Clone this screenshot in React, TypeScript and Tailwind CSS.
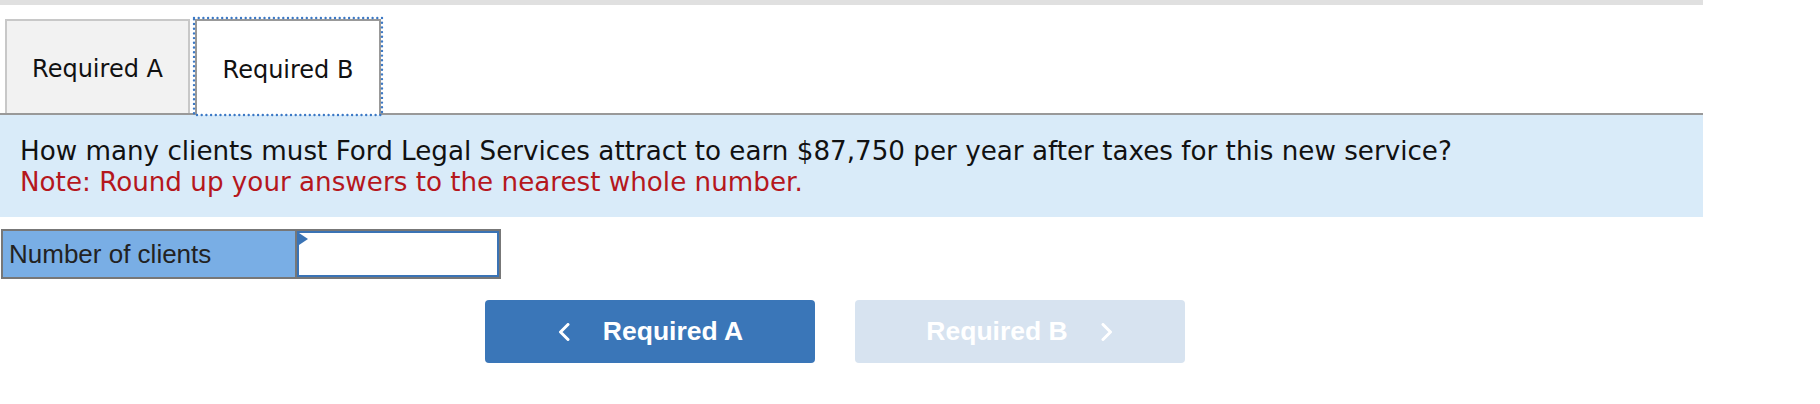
import React from 'react'

const Chevron = ({ dir }: { dir: 'left' | 'right' }) => (
  <svg width="14" height="18" viewBox="0 0 14 18" fill="none" className="shrink-0">
    <polyline
      points={dir === 'left' ? '11,1.5 3.5,9 11,16.5' : '3,1.5 10.5,9 3,16.5'}
      stroke="white"
      strokeWidth="3"
      strokeLinecap="round"
      strokeLinejoin="round"
    />
  </svg>
)

// focus ring drawn with round dots, like the browser's dotted outline
const FocusRing = () => (
  <svg className="pointer-events-none absolute -bottom-[1px] -left-[4px] -right-[4px] -top-[4px] h-[calc(100%+5px)] w-[calc(100%+8px)] overflow-visible">
    <rect
      x="1"
      y="1"
      width="calc(100% - 2px)"
      height="calc(100% - 2px)"
      fill="none"
      stroke="#3b78c5"
      strokeWidth="2.4"
      strokeLinecap="round"
      strokeDasharray="0 4.7"
    />
  </svg>
)

const App = () => {
  return (
    <div className="w-[1703px] bg-white">
      <div className="h-[5px] bg-[#e0e0e0]" />

      {/* tabs */}
      <div className="mt-[14px] flex items-start border-b-2 border-[#999999] pl-[5px] font-['DejaVu_Sans',sans-serif] text-[24px] text-[#111]">
        <div className="flex h-[94px] w-[185px] items-center justify-center border-2 border-b-0 border-[#c8c8c8] bg-[#f2f2f2] pt-[4px]">
          Required A
        </div>
        <div className="relative -mb-[2px] ml-[5px] flex h-[96px] w-[186px] items-center justify-center border-2 border-b-0 border-[#999999] bg-white pt-[3px]">
          Required B
          <FocusRing />
        </div>
      </div>

      {/* question */}
      <div className="bg-[#d9ebf9] pb-[19px] pl-[20px] pt-[21px] font-['DejaVu_Sans',sans-serif] text-[26.2px] leading-[31px]">
        <p className="text-[#111]">
          How many clients must Ford Legal Services attract to earn $87,750 per year after taxes for this new service?
        </p>
        <p className="text-[#b5171d]">Note: Round up your answers to the nearest whole number.</p>
      </div>

      {/* answer row */}
      <div className="ml-[1px] mt-[12px] flex h-[50px] w-[500px] border-2 border-[#777777] font-['Liberation_Sans',Arial,sans-serif] text-[26px] text-[#222]">
        <div className="flex w-[292px] items-center bg-[#79aee5] pl-[6px]">Number of clients</div>
        <div className="flex-1 border-l-2 border-[#777777]">
          <div className="relative h-full border-2 border-[#3a73b5] bg-white">
            <div className="absolute left-0 top-0 h-0 w-0 border-y-[6px] border-l-[9px] border-y-transparent border-l-[#3a73b5]" />
          </div>
        </div>
      </div>

      {/* navigation buttons */}
      <div className="ml-[485px] mt-[21px] flex gap-[40px] font-['Liberation_Sans',Arial,sans-serif] text-[26.5px] font-bold text-white">
        <button className="flex h-[63px] w-[330px] items-center justify-center gap-[32px] rounded-[4px] bg-[#3a76b8]">
          <Chevron dir="left" />
          <span>Required A</span>
        </button>
        <button className="flex h-[63px] w-[330px] items-center justify-center gap-[32px] rounded-[4px] bg-[#d7e3f0]">
          <span>Required B</span>
          <Chevron dir="right" />
        </button>
      </div>
    </div>
  )
}

export default App
